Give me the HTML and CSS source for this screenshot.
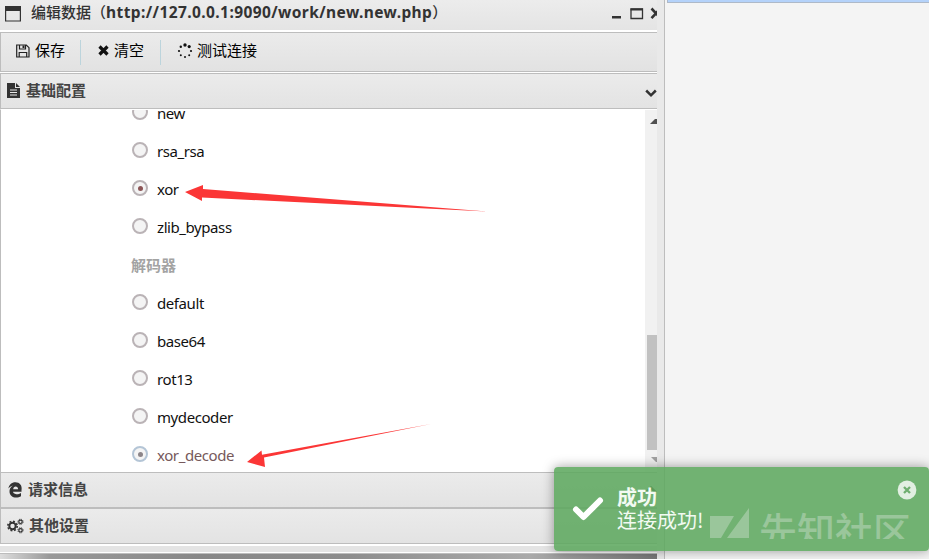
FILE: index.html
```html
<!DOCTYPE html>
<html lang="zh-CN">
<head>
<meta charset="utf-8">
<title>编辑数据</title>
<link rel="stylesheet" href="styles.css">
</head>
<body>
<div class="app">
  <section class="window">
    <div class="pane">
      <header class="titlebar">
        <svg class="win-icon" width="16" height="16" viewBox="0 0 16 16"><path d="M.6 1h14.800v14H.6z" fill="none" stroke="#333" stroke-width="1.200"/><path d="M0 0h16v5H0z" fill="#333"/></svg>
        <h1><span class="title-cjk">编辑数据（</span><span class="title-url">http://127.0.0.1:9090/work/new.new.php</span><span class="title-cjk">）</span></h1>
        <svg class="controls" width="46" height="16" viewBox="0 0 46 16"><path d="M0 10h9v2.500H0z" fill="#333"/><path d="M19 3h11.500v9.500H19z" fill="none" stroke="#333" stroke-width="1.300"/><path d="M18.500 2.500h12.500v2H18.500z" fill="#333"/><path d="M39.500 2.500l4.500 4.800-4.500 4.800M48.500 2.500L44 7.300l4.500 4.800" fill="none" stroke="#333" stroke-width="2.600"/></svg>
      </header>
      <nav class="toolbar">
        <button class="tool save"><svg width="14" height="14" viewBox="0 0 14 14"><path d="M.7 1h9.600l2.700 2.700V13H.7zM3.200 13V8.500h7.500V13M3.500 1v4h6V1" fill="none" stroke="#222" stroke-width="1.200"/><path d="M6.500 1.500h2v2.500h-2z" fill="#222"/></svg><span>保存</span></button>
        <button class="tool clear"><svg width="11" height="11" viewBox="0 0 11 11"><path d="M1.500 1.500l8 8M9.500 1.500l-8 8" stroke="#111" stroke-width="3.200"/></svg><span>清空</span></button>
        <button class="tool test"><svg width="16" height="16" viewBox="0 0 16 16" fill="#111"><circle cx="8" cy="2" r="1.700"/><circle cx="12.200" cy="3.600" r="1.600"/><circle cx="14" cy="8" r="1.100"/><circle cx="12.200" cy="12.300" r="1"/><circle cx="8" cy="14" r="1"/><circle cx="3.800" cy="12.300" r="1"/><circle cx="2" cy="8" r="1.100"/><circle cx="3.800" cy="3.800" r="1.200"/></svg><span>测试连接</span></button>
      </nav>
      <div class="section basic">
        <svg width="14" height="16" viewBox="0 0 14 16"><path d="M0 0h8v5h5v10H0z" fill="#333"/><path d="M9 0l4 4H9z" fill="#333"/><path d="M3 7h7M3 9.500h7M3 12h7" stroke="#e8e8e8"/></svg>
        <h2>基础配置</h2>
        <svg class="chev" width="12" height="9" viewBox="0 0 12 9"><path d="M1.200 1.500L6 6.300l4.800-4.800" fill="none" stroke="#333" stroke-width="2.500"/></svg>
      </div>
      <div class="content">
        <div class="options">
          <label class="opt"><i class="radio"></i><span>new</span></label>
          <label class="opt"><i class="radio"></i><span>rsa_rsa</span></label>
          <label class="opt"><i class="radio on"></i><span>xor</span></label>
          <label class="opt"><i class="radio"></i><span>zlib_bypass</span></label>
          <h3>解码器</h3>
          <label class="opt"><i class="radio"></i><span>default</span></label>
          <label class="opt"><i class="radio"></i><span>base64</span></label>
          <label class="opt"><i class="radio"></i><span>rot13</span></label>
          <label class="opt"><i class="radio"></i><span>mydecoder</span></label>
          <label class="opt focused"><i class="radio on"></i><span>xor_decode</span></label>
        </div>
        <div class="scrollbar">
          <svg width="7" height="5" viewBox="0 0 7 5"><path d="M0 5L5 0h2v5z" fill="#505050"/></svg>
          <div class="thumb"></div>
          <svg class="down" width="6" height="5" viewBox="0 0 6 5"><path d="M0 0h6v5H5z" fill="#a0a0a0"/></svg>
        </div>
      </div>
      <div class="section request">
        <svg width="15" height="16" viewBox="0 0 15 16"><path d="M4 8.200h9.500C14.500 3.500 11.500.3 7.500.3 3.500.3 1 3 .4 6.600 2 4.800 3.500 4 5 3.600 2.500 5.200 1.300 7.500 1.500 10c.3 3.500 3 5.600 6.500 5.600 2 0 3.700-.5 5-1.300v-3.400c-1.500 1-3 1.400-4.700 1.300C6.300 12 5 11 5 9.800h8.500V8z" fill="#333"/><path d="M5.200 7.300c.1-3.800 4.900-3.800 4.900 0z" fill="#e7e7e7"/></svg>
        <h2>请求信息</h2>
        <svg class="chev" width="12" height="9" viewBox="0 0 12 9"><path d="M1.200 6.500L6 1.700l4.800 4.800" fill="none" stroke="#333" stroke-width="2.500"/></svg>
      </div>
      <div class="section other">
        <svg width="17" height="16" viewBox="0 0 17 16" fill="none" stroke="#333"><circle cx="5.500" cy="8" r="3.200" stroke-width="2"/><circle cx="5.500" cy="8" r="4.700" stroke-width="1.600" stroke-dasharray="1.900 1.790"/><circle cx="13.500" cy="3.800" r="1.700" stroke-width="1.200"/><circle cx="13.500" cy="3.800" r="2.600" stroke-dasharray="1.100 .94"/><circle cx="13.500" cy="12.300" r="1.700" stroke-width="1.200"/><circle cx="13.500" cy="12.300" r="2.600" stroke-dasharray="1.100 .94"/></svg>
        <h2>其他设置</h2>
        <svg class="chev" width="12" height="9" viewBox="0 0 12 9"><path d="M1.200 6.500L6 1.700l4.800 4.800" fill="none" stroke="#333" stroke-width="2.500"/></svg>
      </div>
      <div class="frame-bottom"></div>
      <div class="backdrop"></div>
    </div>
  </section>
  <aside class="side"><div class="side-top"></div></aside>
</div>
<svg class="arrows" width="929" height="559" viewBox="0 0 929 559" fill="#fb3636"><path d="M185 192l18-7v4l284 22.500-285-14v3.500z"/><path d="M247 462l14.500-11.500.5 4.200L431 424 264 457.500l1 9.500z"/></svg>
<div class="toast">
  <svg class="check" width="32" height="25" viewBox="0 0 32 25"><path d="M4 13.500l7.500 7.500L28 4.500" fill="none" stroke="#fff" stroke-width="6" stroke-linecap="round" stroke-linejoin="round"/></svg>
  <div class="message"><strong>成功</strong><p>连接成功!</p></div>
  <svg class="close" width="20" height="20" viewBox="0 0 20 20"><circle cx="10" cy="10" r="9.400" fill="#e2efe2"/><path d="M7 7l6 6M13 7l-6 6" stroke="#6fae6f" stroke-width="2.300"/></svg>
  <div class="brand"><svg width="40" height="31" viewBox="0 0 40 31"><path d="M0 8h24L11 30H0zM39 0v30H17z" fill="#9ac69b"/></svg><span>先知社区</span></div>
</div>
</body>
</html>
```
FILE: styles.css
```css
* { box-sizing: border-box; }
body { margin: 0; width: 929px; height: 559px; overflow: hidden; position: relative; background: #f4f4f4; font-family: "Noto Sans", "Noto Sans CJK SC", sans-serif; color: #333; }
svg { display: block; flex: none; }
h1, h2, h3, p { margin: 0; }
.app { display: flex; height: 559px; }
.window { width: 665px; background: #e9e9e9; border-right: 1px solid #bdbdbd; }
.pane { width: 657px; height: 559px; overflow: hidden; background: #fff; display: flex; flex-direction: column; }
.titlebar { flex: none; height: 30px; display: flex; align-items: center; padding: 0 0 3px 5px; margin-bottom: 2px; background: linear-gradient(#ececec, #e4e4e4); }
.win-icon { margin-top: 1px; }
.titlebar h1 { display: flex; margin-left: 10px; margin-top: -3px; font-size: 15px; line-height: 24px; white-space: nowrap; }
.title-cjk { font-weight: 500; font-family: "Noto Sans CJK SC", sans-serif; }
.title-url { font-size: 15.5px; letter-spacing: 0.41px; }
.controls { margin-left: auto; margin-right: -1px; margin-top: 1px; }
.toolbar { flex: none; height: 40px; display: flex; align-items: center; border: 1px solid #bdbdbd; border-right: 0; background: linear-gradient(#ebebeb, #e2e2e2); margin-bottom: 1px; }
.tool { display: flex; align-items: center; height: 25px; border: 0; padding: 0; background: none; font: 15px/20px "Noto Sans CJK SC", sans-serif; color: #000; }
.tool svg { margin-top: -3px; }
.tool span { margin-top: -5px; }
.save { width: 80px; padding-left: 15px; gap: 5px; border-right: 1px solid #bcd4dc; }
.clear { width: 80px; padding-left: 17px; gap: 5px; border-right: 1px solid #bcd4dc; }
.test { padding-left: 16px; gap: 4px; }
.section { flex: none; display: flex; align-items: center; border: 1px solid #bdbdbd; border-right: 0; background: linear-gradient(#ebebeb, #e3e3e3); }
.section h2 { font: 700 15px/20px "Noto Sans CJK SC", sans-serif; margin-top: -2px; color: #444; }
.chev { margin-left: auto; }
.basic { height: 36px; padding-left: 6px; gap: 5px; }
.basic .chev { margin-top: 5px; }
.content { flex: none; height: 363px; display: flex; border-left: 1px solid #bdbdbd; border-top: 1px solid #fff; overflow: hidden; }
.options { flex: 1; padding-left: 130px; margin-top: -16px; }
.opt { display: flex; align-items: center; height: 38px; gap: 9px; font-size: 15px; line-height: 24px; letter-spacing: -0.42px; color: #111; }
.radio { width: 16px; height: 16px; border: 2px solid #bab3b6; border-radius: 50%; background: #f4f4f4; display: flex; align-items: center; justify-content: center; margin-bottom: 2px; margin-left: 1px; }
.radio.on::after { content: ""; width: 5px; height: 5px; border-radius: 50%; background: #8c5556; }
.focused { color: #76595b; }
.focused .radio { border-color: #b4c5d6; }
.focused .radio.on::after { background: #8c8589; }
.options h3 { height: 38px; font: 700 15px/38px "Noto Sans CJK SC", sans-serif; color: #a3a3a3; }
.scrollbar { width: 12px; background: #f1f1f1; display: flex; flex-direction: column; padding: 9px 0 0 2px; }
.scrollbar > svg { align-self: flex-end; }
.thumb { flex: none; height: 115px; margin-top: 211px; background: #c1c1c1; }
.scrollbar .down { margin-top: 7px; }
.request { height: 36px; padding-left: 7px; gap: 5px; }
.other { height: 36px; padding-left: 6px; gap: 5px; }
.frame-bottom { flex: none; height: 6px; margin: 2px 0 1px; background: #e4e4e4; }
.backdrop { flex: 1; border-top: 1px solid #bdbdbd; background: linear-gradient(90deg, #ddd 0, #999 50px, #888 200px, #8d8d8d 350px, #aaa 530px, #777 657px); }
.side { flex: 1; padding-left: 2px; background: #f4f4f4; }
.side-top { height: 3px; background: #b4d2fa; border: solid #aeb9c8; border-width: 0 0 1px 1px; }
.arrows { position: absolute; left: 0; top: 0; }
.toast { position: absolute; left: 554px; top: 467px; width: 375px; height: 84px; border-radius: 4px; background: rgba(95, 169, 96, .88); box-shadow: 0 0 12px rgba(0, 0, 0, .38); display: flex; padding: 18px 0 0 18px; color: #fff; }
.check { margin-top: 11px; }
.message { margin-left: 13px; font: 20px/23px "Noto Sans CJK SC", sans-serif; color: #f2faf2; }
.message strong { display: block; font-weight: 700; }
.message p { font-size: 20px; }
.close { position: absolute; right: 12px; top: 13px; }
.brand { position: absolute; left: 156px; top: 41px; height: 31px; overflow: hidden; display: flex; gap: 9px; color: #9ac69b; font: 500 38px/44px "Noto Sans CJK SC", sans-serif; }
.brand span { margin-top: -1px; }
```
